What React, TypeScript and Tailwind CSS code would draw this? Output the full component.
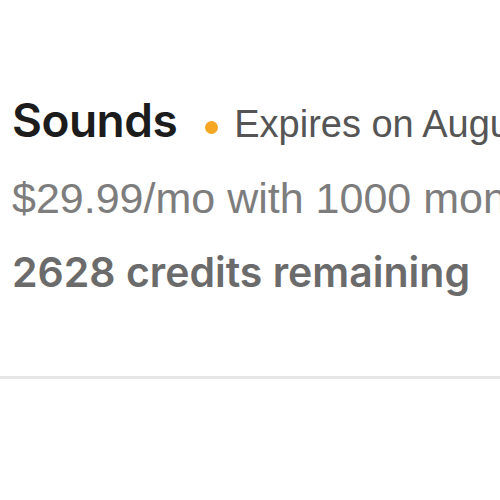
export default function App() {
  return (
    <div className="w-[500px] h-[500px] overflow-hidden bg-white">
      <div className="pt-[92px] pl-[12px]">
        <div className="flex items-baseline whitespace-nowrap">
          <span className="shrink-0 text-[46px] leading-[56px] font-semibold text-[#1c1c1c] tracking-[-0.5px] [font-family:Inter,sans-serif]">
            Sounds
          </span>
          <span className="shrink-0 ml-[28px] mr-[16px] w-[13px] h-[13px] rounded-full bg-[#f5a623] self-center translate-y-[5px]" />
          <span className="shrink-0 text-[38px] leading-[56px] text-[#555555] [font-family:'Liberation_Sans',Arial,sans-serif]">
            Expires on August 12, 2024
          </span>
        </div>
        <div className="mt-[18px] text-[43px] leading-[56px] text-[#7d7d7d] whitespace-nowrap [font-family:'Liberation_Sans',Arial,sans-serif]">
          $29.99/mo with 1000 monthly credits
        </div>
        <div className="mt-[18px] text-[41px] leading-[56px] font-semibold text-[#6b6b6b] whitespace-nowrap [font-family:Inter,sans-serif]">
          2628 credits remaining
        </div>
      </div>
      <div className="mt-[76px] h-[3px] bg-[#e6e6e6]" />
    </div>
  )
}
